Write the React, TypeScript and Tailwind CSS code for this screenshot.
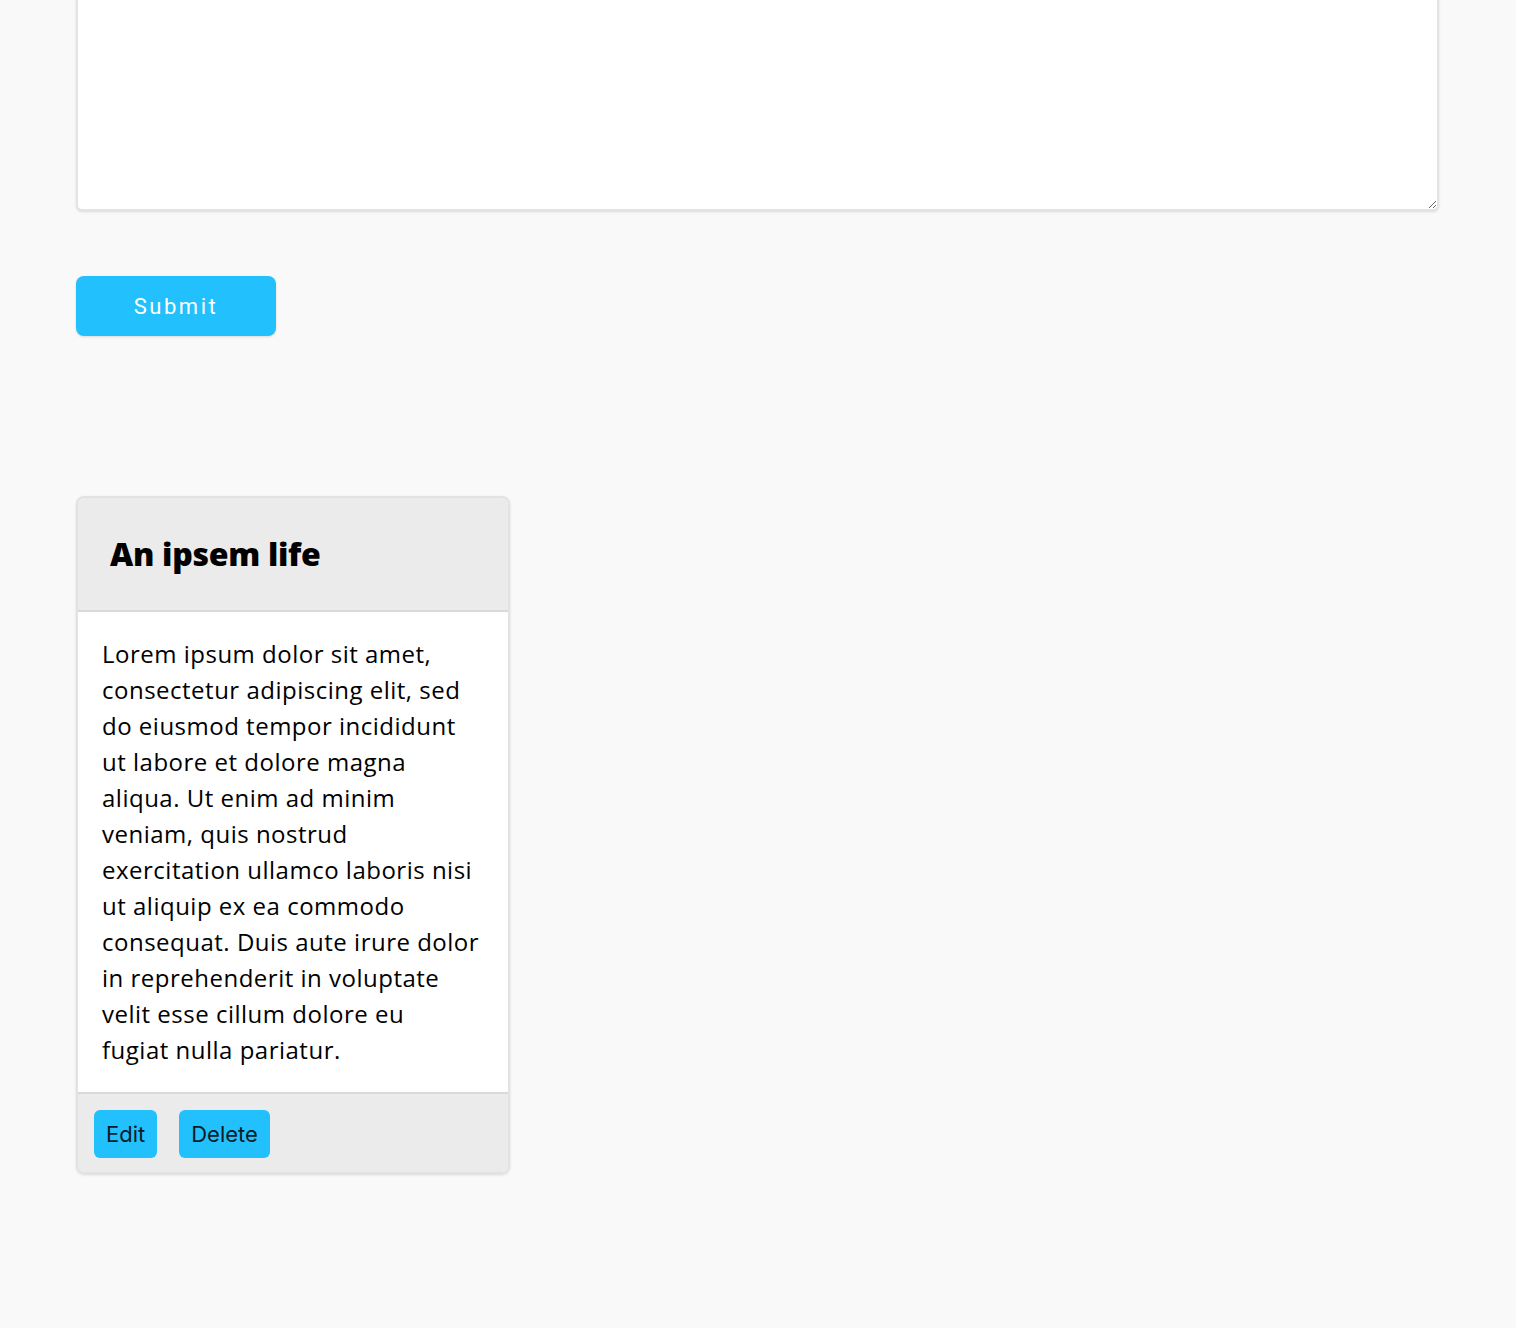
export default function App() {
  return (
    <div className="min-h-screen flex flex-col items-start bg-[#f9f9f9] px-[76px] pb-40 [font-family:'Open_Sans',sans-serif] text-black">
      <textarea
        className="block w-[1363px] h-[231px] -mt-[20px] bg-white border-2 border-[#e4e4e4] rounded-md shadow-sm outline-none"
        defaultValue=""
      />
      <button className="mt-[65px] w-[200px] h-[60px] rounded-lg bg-[#22c0fc] text-white text-[22px] tracking-[2.5px] font-normal shadow-sm [font-family:Roboto,sans-serif]">
        Submit
      </button>
      <div className="mt-[160px] w-[434px] rounded-lg border-2 border-[#e2e2e2] shadow-sm overflow-hidden">
        <div className="h-[114px] bg-[#ebebeb] border-b-2 border-[#d9d9d9] flex items-center px-8">
          <h2 className="text-[32px] font-extrabold tracking-[-0.3px]">An ipsem life</h2>
        </div>
        <div className="bg-white px-6 py-6 text-[24px] tracking-[0.5px] leading-9">
          Lorem ipsum dolor sit amet, consectetur adipiscing elit, sed do eiusmod tempor incididunt ut labore
          et dolore magna aliqua. Ut enim ad minim veniam, quis nostrud exercitation ullamco laboris nisi ut
          aliquip ex ea commodo consequat. Duis aute irure dolor in reprehenderit in voluptate velit esse
          cillum dolore eu fugiat{'\u00a0'}nulla pariatur.
        </div>
        <div className="bg-[#ebebeb] border-t-2 border-[#d9d9d9] flex gap-[22px] px-4 pt-4 pb-[14px] [font-family:Inter,sans-serif]">
          <button className="h-12 px-3 rounded-md bg-[#22c0fc] text-[22px] text-[#0d1b26]">Edit</button>
          <button className="h-12 px-3 rounded-md bg-[#22c0fc] text-[22px] text-[#0d1b26]">Delete</button>
        </div>
      </div>
    </div>
  )
}
